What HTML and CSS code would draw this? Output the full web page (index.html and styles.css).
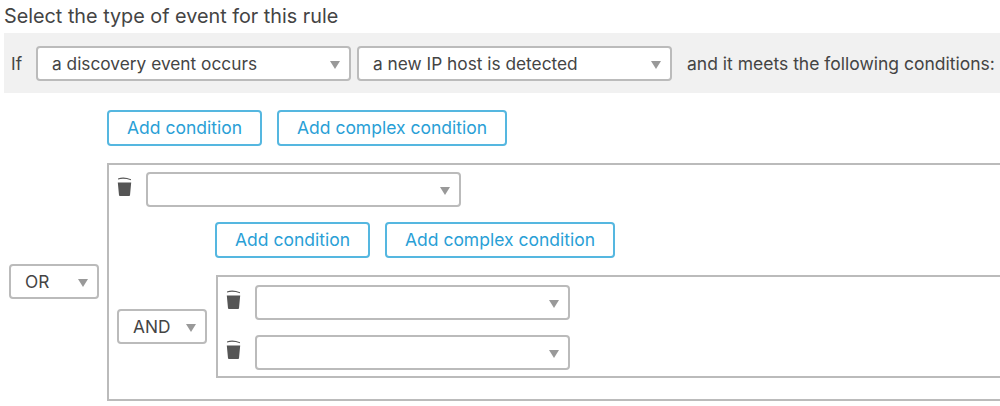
FILE: index.html
```html
<!DOCTYPE html>
<html lang="en">
<head>
	<meta charset="UTF-8">
	<title>Select the type of event for this rule</title>
	<link rel="stylesheet" href="styles.css">
</head>
<body>
	<h2 class="title">Select the type of event for this rule</h2>
	<div class="if-bar">
		<span class="if-label">If</span>
		<div class="select wide">a discovery event occurs</div>
		<div class="select wide">a new IP host is detected</div>
		<span class="if-tail">and it meets the following conditions:</span>
	</div>

	<div class="tree outer">
		<div class="buttons">
			<a class="btn add">Add condition</a>
			<a class="btn complex">Add complex condition</a>
		</div>
		<div class="select op or">OR</div>
		<div class="box outer-box">
			<div class="row">
				<svg class="trash" viewBox="0 0 15 20"><path d="M1 2.4Q7 .2 14 3.2L14 4.2Q7 1.8 1 3.4Z"/><path d="M.8 6.5H14.2L13 19.2Q13 20 12 20H3Q2 20 2 19.2Z"/></svg>
				<div class="select wide"></div>
			</div>
			<div class="tree inner">
				<div class="buttons">
					<a class="btn add">Add condition</a>
					<a class="btn complex">Add complex condition</a>
				</div>
				<div class="select op">AND</div>
				<div class="box inner-box">
					<div class="row">
						<svg class="trash" viewBox="0 0 15 20"><path d="M1 2.4Q7 .2 14 3.2L14 4.2Q7 1.8 1 3.4Z"/><path d="M.8 6.5H14.2L13 19.2Q13 20 12 20H3Q2 20 2 19.2Z"/></svg>
						<div class="select wide"></div>
					</div>
					<div class="row">
						<svg class="trash" viewBox="0 0 15 20"><path d="M1 2.4Q7 .2 14 3.2L14 4.2Q7 1.8 1 3.4Z"/><path d="M.8 6.5H14.2L13 19.2Q13 20 12 20H3Q2 20 2 19.2Z"/></svg>
						<div class="select wide"></div>
					</div>
				</div>
			</div>
		</div>
	</div>
</body>
</html>
```

FILE: styles.css
```css
*{
	margin:0;
	padding:0;
	box-sizing:border-box;
}

body {
	font-family:Inter, "Liberation Sans", Arial, sans-serif;
	font-size:17.3px;
	color:#444;
	background:#fff;
	overflow:hidden;
	width:1000px;
	height:406px;
}

.title {
	font-size:19.8px;
	font-weight:normal;
	line-height:21px;
	padding:6px 0 0 4px;
	height:33px;
}

.if-bar {
	display:flex;
	align-items:center;
	height:60px;
	margin-left:4px;
	padding-left:7px;
	background:#f1f1f1;
	white-space:nowrap;
}

.if-label {
	width:25px;
}

.if-bar .select + .select {
	margin-left:6px;
}

.if-tail {
	margin-left:15px;
	font-size:17.5px;
}

.select {
	position:relative;
	height:35px;
	line-height:31px;
	padding-left:14px;
	background:#fff;
	border:2px solid #bbb;
	border-radius:4px;
}

.select::after {
	content:"";
	position:absolute;
	right:9px;
	top:13px;
	border-left:5px solid transparent;
	border-right:5px solid transparent;
	border-top:8px solid #999;
}

.wide {
	width:315px;
}

.op {
	width:90px;
	align-self:center;
}

.or {
	margin-top:-1px;
}

.tree {
	display:grid;
	grid-template-columns:90px 1fr;
	column-gap:8px;
}

.outer {
	margin:17px 0 0 9px;
	width:1010px;
}

.inner {
	margin-top:15px;
}

.buttons {
	grid-column:2;
	display:flex;
	gap:15px;
	margin-bottom:17px;
}

.btn {
	height:36px;
	line-height:32px;
	font-size:17.5px;
	text-align:center;
	color:#2a9fd6;
	border:2px solid #55b7e0;
	border-radius:4px;
}

.add {
	width:155px;
}

.complex {
	width:230px;
}

.box {
	border:2px solid #bbb;
	border-right:0;
}

.outer-box {
	height:238px;
	padding:7px 0 0 8px;
}

.inner-box {
	display:flex;
	flex-direction:column;
	gap:15px;
	margin-left:1px;
	height:103px;
	padding:8px 0 0 8px;
}

.row {
	display:flex;
	align-items:flex-start;
	gap:14px;
}

.trash {
	width:15px;
	height:20px;
	margin-top:4px;
	fill:#555;
}
```
